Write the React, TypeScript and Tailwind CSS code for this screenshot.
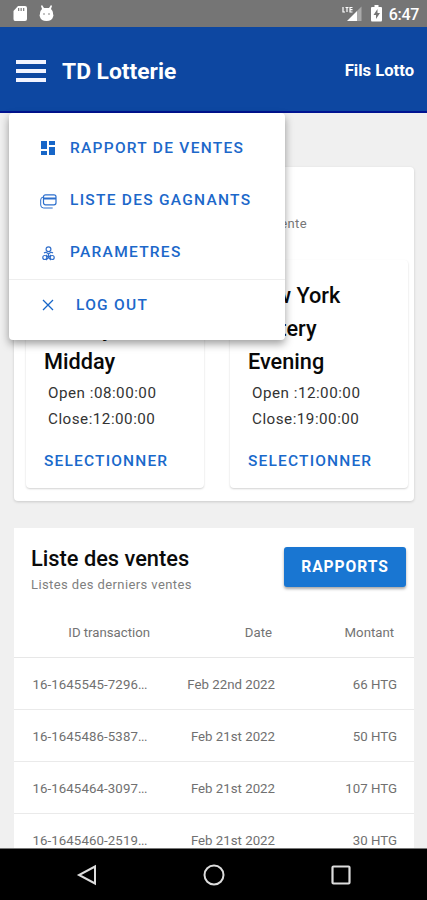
import React from "react";

const menuText = "whitespace-nowrap text-[15.500px] font-medium tracking-[1.270px] text-[#1c68ca]";

function StatusBar() {
  return (
    <div className="flex h-[27px] shrink-0 items-center bg-[#757575] pl-[13px] pr-[8px] text-white">
      <svg className="h-[17px] w-[14px]" viewBox="0 0 14 17" fill="#fff">
        <path d="M5 1h7q2 0 2 2v11q0 2-2 2H2q-1.500 0-1.500-2V6z" />
        <path d="M5 3h1.300v3H5zM7.500 3h1.300v3H7.500zM10 3h1.300v3H10z" fill="#858585" />
      </svg>
      <svg className="ml-[12px] h-[17px] w-[15px]" viewBox="0 0 15 17" fill="#fff">
        <path d="M3 0l2 3h5l2-3 1 1-1 3q2 2 2 4v1q1 1 0 3-1 4-6.500 4T1 12q-1-2 0-3V8q0-2 2-4L2 1z" />
        <circle cx="5" cy="9" r=".8" fill="#777" />
        <circle cx="10" cy="9" r=".8" fill="#777" />
      </svg>
      <svg className="ml-auto h-[18px] w-[21px]" viewBox="0 0 21 18">
        <path d="M5 16L15 6v10z" fill="#fff" />
        <path d="M15 6l4.500-4.500V16H15z" fill="#a9a9a9" />
        <path d="M1 2v5h2M3.500 2.500h3M5 2.500V7M10.500 2.500H8v4.500h2.500M8 4.700h2.500" fill="none" stroke="#fff" strokeWidth="1.200" />
      </svg>
      <svg className="ml-[8px] h-[17px] w-[11px]" viewBox="0 0 11 17">
        <path d="M3.500 0h4v2H10q1 0 1 1v12q0 1.500-1 1.500H1Q0 16.500 0 15V3q0-1 1-1h2.500z" fill="#fff" />
        <path d="M6.500 4L2.500 10H5v4l4-6H6.500z" fill="#757575" />
      </svg>
      <span className="ml-[7px] pt-[2px] text-[16px] font-medium leading-none tracking-[-0.300px]">6:47</span>
    </div>
  );
}

function Menu() {
  return (
    <nav className="absolute left-[9px] top-[113px] z-10 h-[227px] w-[276px] rounded-[4px] bg-white pt-[10px] shadow-[0_4px_9px_rgba(0,0,0,0.38)]">
      <div className="flex h-[52px] items-center pl-[32px]">
        <svg className="-mt-[2px] h-[14px] w-[14px]" viewBox="0 0 14 14" fill="#1766c8">
          <path d="M0 0h6v8H0zM8 0h6v4H8zM0 10h6v4H0zM8 6h6v8H8z" />
        </svg>
        <span className={`ml-[15px] ${menuText}`}>RAPPORT DE VENTES</span>
      </div>
      <div className="flex h-[52px] items-center pl-[31px]">
        <svg className="h-[15px] w-[17px]" viewBox="0 0 17 15" fill="none" stroke="#2c6fcd">
          <rect x="3.500" y=".8" width="12.500" height="10" rx="2" strokeWidth="1.200" />
          <path d="M3.500 4.500H16" strokeWidth="2" />
          <path d="M3.500 3Q.7 3 .7 6v5q0 3 3 3h9" />
        </svg>
        <span className={`ml-[13px] ${menuText}`}>LISTE DES GAGNANTS</span>
      </div>
      <div className="flex h-[52px] items-center pl-[33px]">
        <svg className="h-[15px] w-[13px]" viewBox="0 0 13 15" fill="none" stroke="#316fcb" strokeWidth="1.200">
          <circle cx="6.500" cy="3.200" r="2.400" />
          <path d="M2 7q2-1.500 4.500 1Q9 5.500 11 7M6.500 8v3" />
          <circle cx="2.800" cy="11.500" r="2" />
          <circle cx="10.200" cy="11.500" r="2" />
          <path d="M4 9l5 5M9 9l-5 5" />
        </svg>
        <span className={`ml-[15px] ${menuText}`}>PARAMETRES</span>
      </div>
      <div className="flex h-[53px] items-center border-t border-[#eeeeee] pl-[33px]">
        <svg className="-mt-[2px] h-[12px] w-[12px]" viewBox="0 0 12 12" stroke="#1766c8" strokeWidth="1.300">
          <path d="M1 1l10 10M11 1L1 11" />
        </svg>
        <span className={`ml-[22px] ${menuText}`}>LOG OUT</span>
      </div>
    </nav>
  );
}

function DrawCard({ name, open, close }: { name: string; open: string; close: string }) {
  return (
    <article className="h-[228px] w-[178px] rounded-[4px] bg-white pl-[18px] pt-[19px] shadow-[0_1px_2px_rgba(0,0,0,0.18)]">
      <h3 className="w-[120px] text-[21.700px] font-medium leading-[33px] text-[#080808]">{name}</h3>
      <div className="ml-[4px] mt-[2px] text-[15.200px] leading-[26px] tracking-[0.500px] text-[#333]">
        <div>Open :{open}</div>
        <div>Close:{close}</div>
      </div>
      <button className="mt-[16px] block text-[15.500px] font-medium leading-[26px] tracking-[1.170px] text-[#1969cb]">SELECTIONNER</button>
    </article>
  );
}

const sales = [
  ["16-1645545-7296", "Feb 22nd 2022", "66 HTG"],
  ["16-1645486-5387", "Feb 21st 2022", "50 HTG"],
  ["16-1645464-3097", "Feb 21st 2022", "107 HTG"],
  ["16-1645460-2519", "Feb 21st 2022", "30 HTG"],
];

export default function App() {
  return (
    <div className="relative flex h-[900px] w-[427px] flex-col overflow-hidden bg-[#f0f0f0] font-['Roboto',sans-serif]">
      <StatusBar />
      <header className="flex h-[86px] shrink-0 items-center border-b-2 border-[#001391] bg-[#0d47a1] pl-[16px] pr-[13px] pt-[4px] text-white">
        <button className="flex w-[30px] flex-col gap-[5px]" aria-label="Menu">
          <span className="h-[4px] w-full bg-[#f2f4ff]" />
          <span className="h-[4px] w-full bg-[#f2f4ff]" />
          <span className="h-[4px] w-full bg-[#f2f4ff]" />
        </button>
        <h1 className="ml-[16px] pt-[2px] text-[22.800px] font-bold">TD Lotterie</h1>
        <span className="ml-auto pt-[1px] text-[16.600px] font-bold">Fils Lotto</span>
      </header>
      <Menu />
      <main className="flex h-[735px] shrink-0 flex-col overflow-hidden px-[14px] pt-[54px]">
        <section className="h-[334px] w-[400px] shrink-0 rounded-[4px] bg-white shadow-[0_1px_3px_rgba(0,0,0,0.16)]">
          <div className="flex h-[93px] w-[293px] items-center justify-end pt-[21px] text-[13px] tracking-[0.400px] text-[#777]">vente</div>
          <div className="flex justify-between pl-[12px] pr-[6px]">
            <DrawCard name="New York Lottery Midday" open="08:00:00" close="12:00:00" />
            <DrawCard name="New York Lottery Evening" open="12:00:00" close="19:00:00" />
          </div>
        </section>
        <section className="mt-[27px] h-[350px] w-[400px] shrink-0 bg-white">
          <div className="flex h-[78px] justify-between pl-[17px] pr-[8px] pt-[15px]">
            <div>
              <h2 className="text-[21.800px] font-medium leading-[31px] text-[#0b0b0b]">Liste des ventes</h2>
              <p className="text-[13px] leading-[22px] tracking-[0.400px] text-[#808080]">Listes des derniers ventes</p>
            </div>
            <button className="mt-[4px] h-[40px] w-[122px] rounded-[3px] bg-[#1976d2] pt-[1px] text-[15.600px] font-bold tracking-[0.950px] text-white shadow-[0_2px_3px_rgba(0,0,0,0.35)]">RAPPORTS</button>
          </div>
          <div className="grid h-[52px] grid-cols-[136px_122px_122px] items-center border-b border-[#e7e7e7] pt-[2px] text-right text-[13.200px] text-[#737373]">
            <span>ID transaction</span><span>Date</span><span>Montant</span>
          </div>
          {sales.map(([id, date, amount]) => (
            <div key={id} className="grid h-[52px] grid-cols-[133px_128px_122px] items-center border-b border-[#eaeaea] pt-[3px] text-right text-[13.250px] text-[#707070]">
              <span className="tracking-[0.100px]">{id}<span className="tracking-[-0.500px]">...</span></span><span>{date}</span><span>{amount}</span>
            </div>
          ))}
        </section>
      </main>
      <footer className="flex h-[52px] shrink-0 justify-center gap-[103px] border-t border-[#777] bg-black pt-[14px]">
        <svg className="h-[24px] w-[24px]" viewBox="0 0 24 24" fill="none" stroke="#ddd" strokeWidth="2"><path d="M20 3.500v17L4 12z" /></svg>
        <svg className="h-[24px] w-[24px]" viewBox="0 0 24 24" fill="none" stroke="#ddd" strokeWidth="2"><circle cx="12" cy="12" r="9.500" /></svg>
        <svg className="h-[24px] w-[24px]" viewBox="0 0 24 24" fill="none" stroke="#ddd" strokeWidth="2.200"><rect x="3.500" y="3.500" width="17" height="17" rx="1" /></svg>
      </footer>
    </div>
  );
}
